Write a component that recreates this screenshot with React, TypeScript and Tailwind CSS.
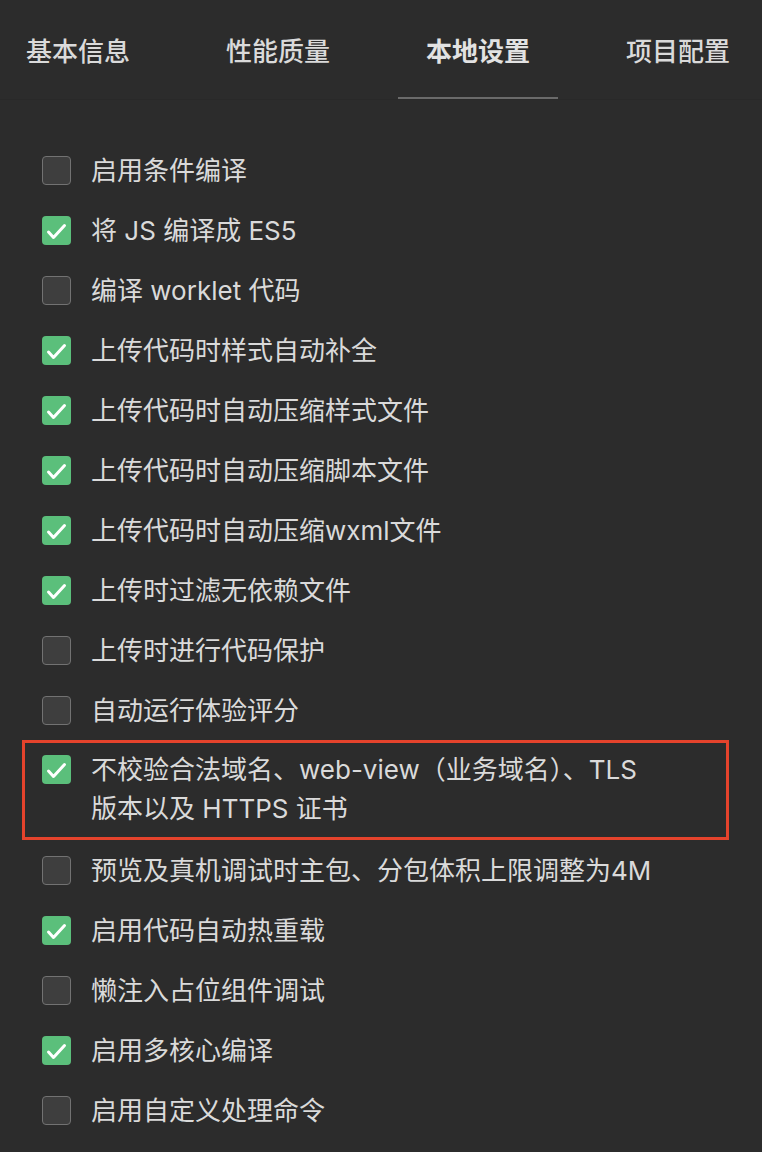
import React from "react";

const tabs = ["基本信息", "性能质量", "本地设置", "项目配置"];

type Item = { label: React.ReactNode; checked: boolean; highlight?: boolean };

const items: Item[] = [
  { label: "启用条件编译", checked: false },
  { label: "将 JS 编译成 ES5", checked: true },
  { label: "编译 worklet 代码", checked: false },
  { label: "上传代码时样式自动补全", checked: true },
  { label: "上传代码时自动压缩样式文件", checked: true },
  { label: "上传代码时自动压缩脚本文件", checked: true },
  { label: "上传代码时自动压缩wxml文件", checked: true },
  { label: "上传时过滤无依赖文件", checked: true },
  { label: "上传时进行代码保护", checked: false },
  { label: "自动运行体验评分", checked: false },
  {
    label: (
      <>
        不校验合法域名、web-view（业务域名）、TLS
        <br />
        版本以及 HTTPS 证书
      </>
    ),
    checked: true,
    highlight: true,
  },
  { label: "预览及真机调试时主包、分包体积上限调整为4M", checked: false },
  { label: "启用代码自动热重载", checked: true },
  { label: "懒注入占位组件调试", checked: false },
  { label: "启用多核心编译", checked: true },
  { label: "启用自定义处理命令", checked: false },
];

function Checkbox({ checked }: { checked: boolean }) {
  if (checked) {
    return (
      <span className="flex h-[29px] w-[29px] shrink-0 items-center justify-center rounded-[4px] bg-[#5bbf7b]">
        <svg width="29" height="29" viewBox="0 0 29 29" fill="none">
          <polyline
            points="6.5,16 11.5,21.5 22.5,9.5"
            stroke="#ffffff"
            strokeWidth="3"
            strokeLinecap="round"
            strokeLinejoin="round"
          />
        </svg>
      </span>
    );
  }
  return <span className="h-[29px] w-[29px] shrink-0 rounded-[4px] border border-[#727272] bg-[#3e3e3e]" />;
}

export default function App() {
  return (
    <div
      className="min-h-[1152px] w-[762px] bg-[#2c2c2c] text-[#dadada]"
      style={{ fontFamily: 'Inter, "Noto Sans CJK SC", sans-serif' }}
    >
      <div className="ml-[-2px] flex h-[100px] gap-[40px] border-b border-[#292929]">
        {tabs.map((t, i) => (
          <div
            key={t}
            className={
              "flex w-[160px] items-center justify-center border-b-2 pt-[6px] text-[26px] " +
              (i === 2 ? "border-[#6a6a6a] font-bold text-[#e2e2e2]" : "border-transparent font-medium")
            }
          >
            {t}
          </div>
        ))}
      </div>

      <ul className="pt-[40px]">
        {items.map((it, i) =>
          it.highlight ? (
            <li
              key={i}
              className="ml-[22px] mr-[33px] flex h-[100px] items-start gap-[20px] border-[3px] border-[#e5432c] pl-[17px] pt-[7px]"
            >
              <span className="mt-[5px]">
                <Checkbox checked={it.checked} />
              </span>
              <span className="text-[26px] leading-[39px]">{it.label}</span>
            </li>
          ) : (
            <li key={i} className="flex h-[60px] items-center gap-[20px] pl-[42px]">
              <Checkbox checked={it.checked} />
              <span className="text-[26px] leading-[39px]">{it.label}</span>
            </li>
          )
        )}
      </ul>
    </div>
  );
}
